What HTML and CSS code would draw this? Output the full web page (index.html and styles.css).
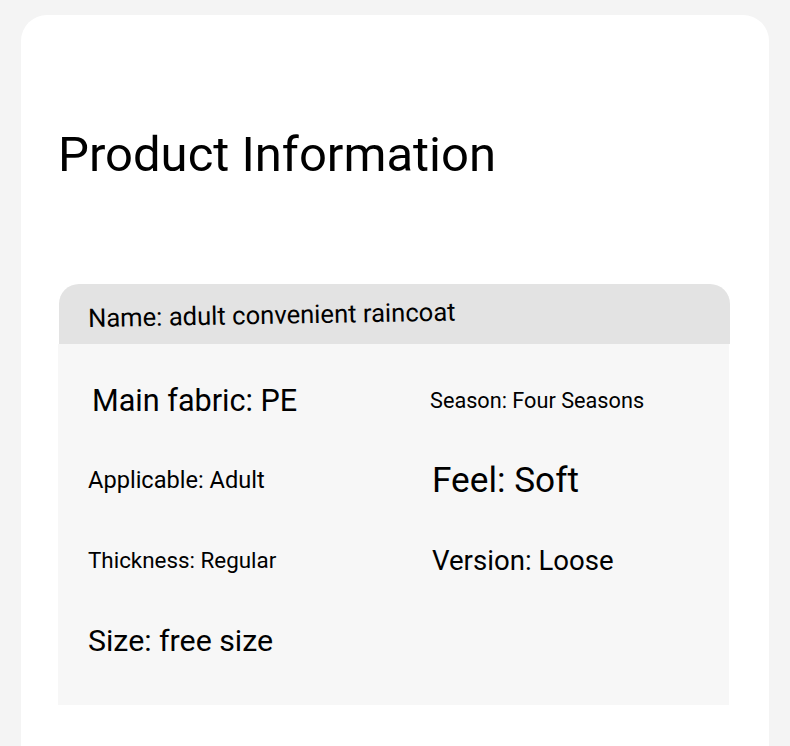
FILE: index.html
```html
<!DOCTYPE html>
<html lang="en">
<head>
<meta charset="utf-8">
<title>Product Information</title>
<link rel="stylesheet" href="styles.css">
</head>
<body>
<main class="card">
  <h1 class="title">Product Information</h1>
  <section class="spec">
    <div class="spec-head"><span class="name">Name: adult convenient raincoat</span></div>
    <div class="spec-body">
      <div class="cell"><span class="t-fabric">Main fabric: PE</span></div>
      <div class="cell"><span class="t-season">Season: Four Seasons</span></div>
      <div class="cell"><span class="t-app">Applicable: Adult</span></div>
      <div class="cell"><span class="t-feel">Feel: Soft</span></div>
      <div class="cell"><span class="t-thick">Thickness: Regular</span></div>
      <div class="cell"><span class="t-version">Version: Loose</span></div>
      <div class="cell"><span class="t-size">Size: free size</span></div>
    </div>
  </section>
</main>
</body>
</html>
```

FILE: styles.css
```css
* { box-sizing: border-box; }
html, body { margin: 0; padding: 0; }
body {
  background: #f4f4f4;
  font-family: Roboto, "Noto Sans", sans-serif;
  color: #000;
  height: 746px;
  overflow: hidden;
  padding: 15px 21px 0 21px;
}
.card {
  background: #fff;
  border-radius: 26px 26px 0 0;
  width: 748px;
  height: 760px;
  padding: 112px 39px 0 37px;
}
.title {
  margin: 0;
  font-weight: 400;
  font-size: 49px;
  line-height: 56px;
  letter-spacing: 0;
}
.spec {
  margin-top: 101px;
  width: 672px;
}
.spec-head {
  background: #e3e3e3;
  height: 60px;
  border-radius: 20px 20px 0 0;
  margin-left: 1px;
  padding: 19px 0 0 29px;
}
.name {
  display: inline-block;
  font-size: 25.6px;
  line-height: 30px;
  transform: rotate(-1deg);
  transform-origin: left center;
}
.spec-body {
  background: #f7f7f7;
  height: 361px;
  width: 671px;
  display: grid;
  grid-template-columns: 342px 1fr;
  grid-auto-rows: 80px;
  padding: 16px 0 0 30px;
}
.cell {
  display: flex;
  align-items: center;
}
.t-fabric { font-size: 30.6px; margin-left: 4px; }
.t-season { font-size: 21.7px; }
.t-app { font-size: 23.6px; }
.t-feel { font-size: 35.2px; margin-left: 2px; }
.t-thick { font-size: 22.4px; }
.t-version { font-size: 27.6px; margin-left: 2px; }
.t-size { font-size: 30.3px; }
```
